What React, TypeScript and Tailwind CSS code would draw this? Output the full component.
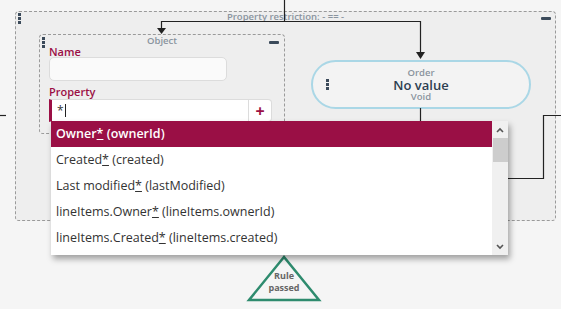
import React from "react";

const font = { fontFamily: '"Open Sans", "Liberation Sans", sans-serif' };

function Handle({ className = "" }: { className?: string }) {
  return (
    <div className={`flex flex-col gap-[1px] ${className}`}>
      <span className="block w-[3px] h-[3px] bg-[#3b4a5a]" />
      <span className="block w-[3px] h-[3px] bg-[#3b4a5a]" />
      <span className="block w-[3px] h-[3px] bg-[#3b4a5a]" />
    </div>
  );
}

function Minus({ className = "" }: { className?: string }) {
  return <span className={`block w-[10px] h-[3px] rounded-[1px] bg-[#3b4a5a] ${className}`} />;
}

const options = [
  ["Owner", "ownerId"],
  ["Created", "created"],
  ["Last modified", "lastModified"],
  ["lineItems.Owner", "lineItems.ownerId"],
  ["lineItems.Created", "lineItems.created"],
];

function Connectors() {
  return (
    <svg className="absolute inset-0 pointer-events-none" width="561" height="309">
      <g stroke="#222" strokeWidth="1.2" fill="none">
        <path d="M284.5 0 V21.5 H161.5 V28" />
        <path d="M284.5 21.5 H420.5 V52" />
        <path d="M420.5 108 V125" />
        <path d="M490 178.5 H543.5 V115.5 H561" />
        <path d="M0 115.5 H6" />
      </g>
      <path d="M157 28 L166 28 L161.5 34 Z" fill="#222" />
      <path d="M416 52 L425 52 L420.5 59 Z" fill="#222" />
      <polygon points="284,257 249,300 319,300" fill="#f5f5f5" stroke="#2e8b6e" strokeWidth="2.5" strokeLinejoin="miter" />
    </svg>
  );
}

export default function App() {
  return (
    <div className="relative w-[561px] h-[309px] overflow-hidden bg-[#f5f5f5] text-[#333]" style={font}>
      {/* outer restriction */}
      <div className="absolute left-[15px] top-[11px] w-[541px] h-[210px] rounded-[4px] border border-dashed border-[#9a9a9a] bg-[#eeeeee]">
        <Handle className="absolute left-[2px] top-[1px]" />
        <Minus className="absolute right-[4px] top-[5px]" />
        <div className="text-center text-[9.5px] leading-[10px] text-[#8a949e] font-semibold">
          Property restriction: - == -
        </div>
      </div>

      {/* object node */}
      <div className="absolute left-[39px] top-[34px] w-[246px] h-[100px] rounded-[4px] border border-dashed border-[#9a9a9a] bg-[#eeeeee] px-[9px]">
        <Handle className="absolute left-[2px] top-[2px]" />
        <Minus className="absolute right-[5px] top-[6px]" />
        <div className="text-center text-[9.5px] leading-[11px] text-[#8a949e] font-semibold">Object</div>
        <div className="text-[11px] leading-[11px] text-[#9b0f45] font-semibold">Name</div>
        <div className="w-[178px] h-[24px] rounded-[5px] border border-[#dcdcdc] bg-[#fafafa]" />
        <div className="mt-[5px] text-[11px] leading-[12px] text-[#9b0f45] font-semibold">Property</div>
        <div className="mt-[1px] flex w-[223px] h-[23px] rounded-r-[4px] border border-[#dcdcdc] border-l-[3px] border-l-[#9b0f45] bg-white">
          <div className="flex-1 flex items-center pl-[5px] text-[12px] text-[#333]">
            *<span className="inline-block w-[1px] h-[13px] bg-[#222] ml-[1px]" />
          </div>
          <div className="w-[23px] flex items-center justify-center border-l border-[#dcdcdc] text-[#9b0f45] text-[16px] font-bold leading-none">+</div>
        </div>
      </div>

      {/* order node */}
      <div className="absolute left-[311px] top-[60px] w-[220px] h-[49px] rounded-full border-2 border-[#aad7e6] bg-[#f3f3f3] flex flex-col items-center justify-center">
        <Handle className="absolute left-[13px] top-[17px]" />
        <div className="text-[9.5px] leading-[12px] text-[#8a949e] font-semibold">Order</div>
        <div className="text-[13px] leading-[12px] text-[#2c3e50] font-semibold">No value</div>
        <div className="text-[9.5px] leading-[12px] text-[#8a949e] font-semibold">Void</div>
      </div>

      <Connectors />

      <div className="absolute left-[248px] top-[270px] w-[72px] text-center text-[9px] leading-[12px] font-bold text-[#666]">
        Rule
        <br />
        passed
      </div>

      {/* dropdown */}
      <div className="absolute left-[51px] top-[121px] w-[457px] h-[134px] bg-white flex shadow-[2px_4px_6px_rgba(0,0,0,0.35)]">
        <div className="flex-1">
          {options.map(([label, key], i) => (
            <div
              key={key}
              className={`h-[26px] flex items-center pl-[5px] text-[12.5px] ${i === 0 ? "bg-[#9a0f45] text-white font-semibold" : "text-[#333]"}`}
            >
              {label}
              <span className="underline">*</span>
              &nbsp;({key})
            </div>
          ))}
        </div>
        <div className="w-[16px] bg-[#f0f0f0] flex flex-col items-center">
          <div className="h-[17px] flex items-center justify-center">
            <svg width="8" height="6" viewBox="0 0 8 6"><path d="M1 5 L4 2 L7 5" stroke="#555" strokeWidth="1.6" fill="none" /></svg>
          </div>
          <div className="w-[15px] h-[24px] bg-[#cdcdcd]" />
          <div className="flex-1" />
          <div className="h-[17px] flex items-center justify-center">
            <svg width="8" height="6" viewBox="0 0 8 6"><path d="M1 1 L4 4 L7 1" stroke="#555" strokeWidth="1.6" fill="none" /></svg>
          </div>
        </div>
      </div>
    </div>
  );
}
